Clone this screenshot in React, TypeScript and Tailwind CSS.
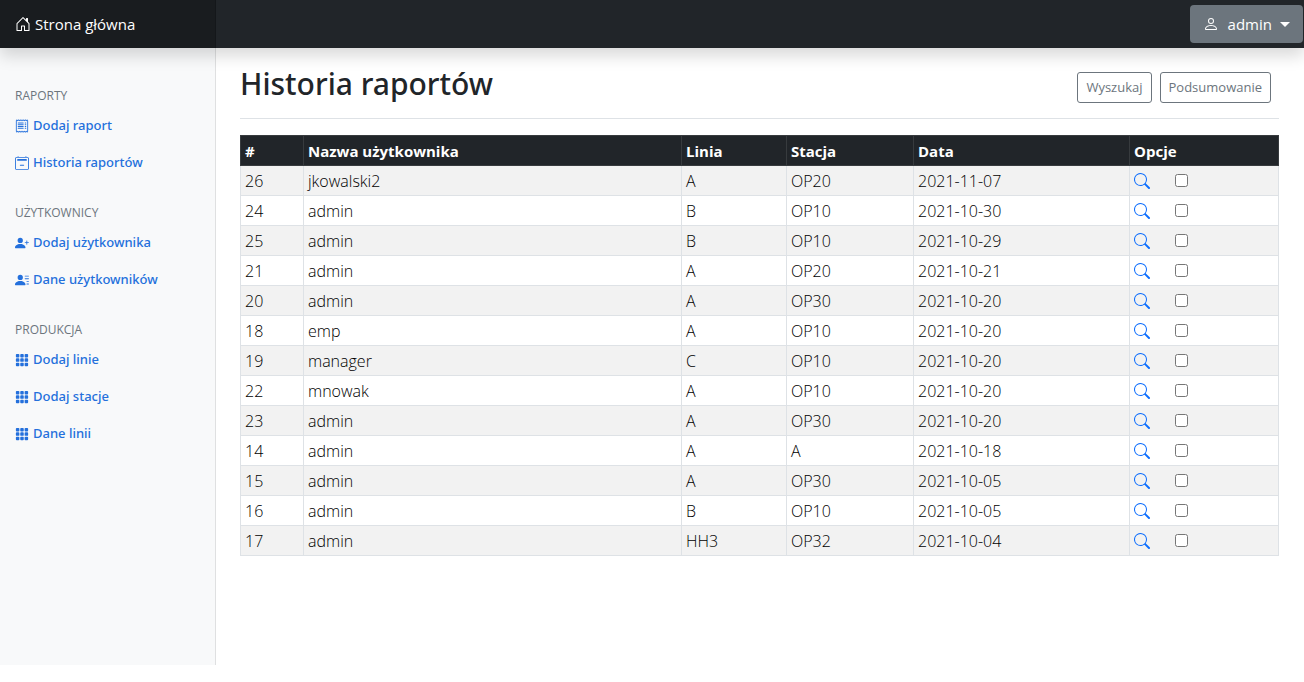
import React from "react";
import type { IconType } from "react-icons";
import {
  BsCalendar2Minus,
  BsGrid3X3GapFill,
  BsHouseDoor,
  BsPerson,
  BsPersonLinesFill,
  BsPersonPlusFill,
  BsReceipt,
  BsSearch,
} from "react-icons/bs";

type NavItem = { label: string; icon: IconType };
type NavSection = { title: string; items: NavItem[] };

const sections: NavSection[] = [
  {
    title: "Raporty",
    items: [
      { label: "Dodaj raport", icon: BsReceipt },
      { label: "Historia raportów", icon: BsCalendar2Minus },
    ],
  },
  {
    title: "Użytkownicy",
    items: [
      { label: "Dodaj użytkownika", icon: BsPersonPlusFill },
      { label: "Dane użytkowników", icon: BsPersonLinesFill },
    ],
  },
  {
    title: "Produkcja",
    items: [
      { label: "Dodaj linie", icon: BsGrid3X3GapFill },
      { label: "Dodaj stacje", icon: BsGrid3X3GapFill },
      { label: "Dane linii", icon: BsGrid3X3GapFill },
    ],
  },
];

type Report = { id: number; user: string; line: string; station: string; date: string };

const reports: Report[] = [
  { id: 26, user: "jkowalski2", line: "A", station: "OP20", date: "2021-11-07" },
  { id: 24, user: "admin", line: "B", station: "OP10", date: "2021-10-30" },
  { id: 25, user: "admin", line: "B", station: "OP10", date: "2021-10-29" },
  { id: 21, user: "admin", line: "A", station: "OP20", date: "2021-10-21" },
  { id: 20, user: "admin", line: "A", station: "OP30", date: "2021-10-20" },
  { id: 18, user: "emp", line: "A", station: "OP10", date: "2021-10-20" },
  { id: 19, user: "manager", line: "C", station: "OP10", date: "2021-10-20" },
  { id: 22, user: "mnowak", line: "A", station: "OP10", date: "2021-10-20" },
  { id: 23, user: "admin", line: "A", station: "OP30", date: "2021-10-20" },
  { id: 14, user: "admin", line: "A", station: "A", date: "2021-10-18" },
  { id: 15, user: "admin", line: "A", station: "OP30", date: "2021-10-05" },
  { id: 16, user: "admin", line: "B", station: "OP10", date: "2021-10-05" },
  { id: 17, user: "admin", line: "HH3", station: "OP32", date: "2021-10-04" },
];

const columns = ["#", "Nazwa użytkownika", "Linia", "Stacja", "Data", "Opcje"];

const cell = "border border-[#dee2e6] px-1 pt-[5px] pb-[3px]";

function TopBar() {
  return (
    <header className="relative z-10 flex h-12 items-center justify-between bg-[#212529] pr-px shadow-[0_8px_16px_rgba(0,0,0,0.15)]">
      <a
        href="#"
        className="flex h-full w-[216px] items-center gap-1 border-r border-[#14171a] bg-[#191c1f] px-[15px] text-[15px] text-white"
      >
        <BsHouseDoor className="size-4" aria-hidden="true" />
        Strona główna
      </a>
      <button
        type="button"
        aria-haspopup="menu"
        className="flex h-[38px] items-center rounded-[4px] bg-[#6c757d] px-[13px] text-[15px] text-white"
      >
        <BsPerson className="mr-[9px] size-4" aria-hidden="true" />
        admin
        <svg viewBox="0 0 10 5" className="ml-2 h-[5px] w-[10px]" fill="currentColor" aria-hidden="true">
          <path d="M0 0h10L5 5z" />
        </svg>
      </button>
    </header>
  );
}

function Sidebar() {
  return (
    <nav className="min-h-[calc(100vh-65px)] w-[216px] shrink-0 border-r border-[#dfe0e1] bg-[#f8f9fa] pt-4">
      {sections.map((section) => (
        <section key={section.title}>
          <h2 className="mt-6 mb-1 px-[15px] text-[12px] leading-[15px] text-[#6c757d] uppercase">
            {section.title}
          </h2>
          <ul>
            {section.items.map(({ label, icon: Icon }) => (
              <li key={label}>
                <a
                  href="#"
                  className="flex items-center gap-1 px-[15px] py-2 font-['Noto_Sans','Open_Sans',sans-serif] text-[13px] leading-[21px] font-medium text-[#2470dc]"
                >
                  <Icon className="size-[14px]" aria-hidden="true" />
                  {label}
                </a>
              </li>
            ))}
          </ul>
        </section>
      ))}
    </nav>
  );
}

function ReportsTable() {
  return (
    <table className="w-full table-fixed border-collapse text-[15px] leading-[21px]">
      <colgroup>
        <col className="w-[63px]" />
        <col />
        <col className="w-[105px]" />
        <col className="w-[127px]" />
        <col className="w-[216px]" />
        <col className="w-[149px]" />
      </colgroup>
      <thead className="bg-[#212529] text-left text-white">
        <tr>
          {columns.map((column) => (
            <th key={column} scope="col" className="border border-[#373b3e] px-1 pt-[5px] pb-[3px] font-bold">
              {column}
            </th>
          ))}
        </tr>
      </thead>
      <tbody className="text-[16px] font-light text-black">
        {reports.map((report) => (
          <tr key={report.id} className="odd:bg-[#f2f2f2]">
            <td className={cell}>{report.id}</td>
            <td className={cell}>{report.user}</td>
            <td className={cell}>{report.line}</td>
            <td className={cell}>{report.station}</td>
            <td className={cell}>{report.date}</td>
            <td className="border border-[#dee2e6] p-1">
              <div className="flex items-center gap-[25px]">
                <a href="#" aria-label={`Pokaż raport ${report.id}`} className="text-[#0d6efd]">
                  <BsSearch className="size-4" aria-hidden="true" />
                </a>
                <input type="checkbox" aria-label={`Zaznacz raport ${report.id}`} className="size-[13px]" />
              </div>
            </td>
          </tr>
        ))}
      </tbody>
    </table>
  );
}

export default function App() {
  return (
    <div className="min-h-screen bg-white font-['Open_Sans','Noto_Sans',sans-serif]">
      <TopBar />
      <div className="flex items-start">
        <Sidebar />
        <main className="min-w-0 flex-1 pr-[25px] pl-6">
          <div className="mb-4 flex items-end justify-between border-b border-[#dee2e6] pt-[17px] pb-[15px]">
            <h1 className="font-['Noto_Sans','Open_Sans',sans-serif] text-[30px] leading-[38px] font-medium text-[#212529]">
              Historia raportów
            </h1>
            <div className="mr-2 flex gap-2">
              <button
                type="button"
                className="h-[31px] rounded-[3px] border border-[#6c757d] px-2 text-[13px] text-[#6c757d]"
              >
                Wyszukaj
              </button>
              <button
                type="button"
                className="h-[31px] rounded-[3px] border border-[#6c757d] px-2 text-[13px] text-[#6c757d]"
              >
                Podsumowanie
              </button>
            </div>
          </div>
          <ReportsTable />
        </main>
      </div>
    </div>
  );
}
